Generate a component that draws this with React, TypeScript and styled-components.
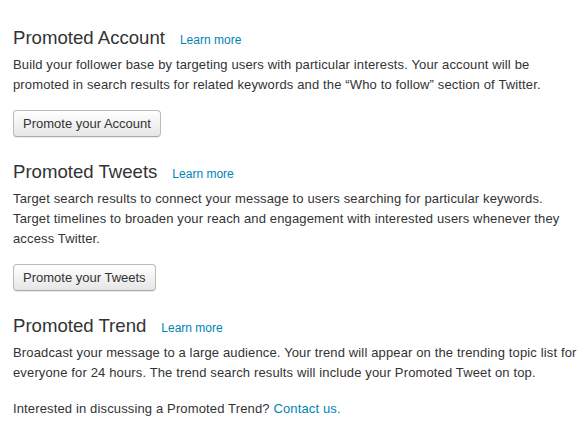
import React from "react";
import styled, { createGlobalStyle } from "styled-components";

const Global = createGlobalStyle`
  html, body { margin: 0; padding: 0; background: #fff; }
  body { font-family: "Liberation Sans", Arial, sans-serif; color: #333; }
`;

const Page = styled.div`
  padding: 26px 0 0 13px;
  display: flex;
  flex-direction: column;
`;

const Section = styled.section<{ $gap?: number }>`
  display: flex;
  flex-direction: column;
  align-items: flex-start;
  margin-bottom: ${(p) => p.$gap ?? 0}px;
`;

const TitleRow = styled.div`
  display: flex;
  align-items: baseline;
  gap: 15px;
  margin-bottom: 5px;
`;

const Title = styled.h2`
  margin: 0;
  font-size: 18.6px;
  font-weight: normal;
  line-height: 24px;
  color: #333;
`;

const Link = styled.a<{ $size?: number }>`
  color: #0084b4;
  text-decoration: none;
  font-size: ${(p) => p.$size ?? 13}px;
`;

const Body = styled.p<{ $top?: number }>`
  margin: ${(p) => p.$top ?? 0}px 0 0 0;
  font-size: 13px;
  line-height: 20px;
  letter-spacing: 0.14px;
  white-space: nowrap;
  color: #333;
`;

const Button = styled.button`
  margin-top: 15px;
  height: 27px;
  padding: 0 9px;
  font-family: "Liberation Sans", Arial, sans-serif;
  font-size: 13px;
  color: #333;
  border: 1px solid #bbb;
  border-bottom-color: #aaa;
  border-radius: 4px;
  background: linear-gradient(#fff, #e6e6e6);
  box-shadow: 0 1px 1px rgba(0, 0, 0, 0.08);
`;

export default function App() {
  return (
    <>
      <Global />
      <Page>
        <Section $gap={23}>
          <TitleRow>
            <Title>Promoted Account</Title>
            <Link $size={12} href="#">Learn more</Link>
          </TitleRow>
          <Body>
            Build your follower base by targeting users with particular interests. Your account will be
            <br />
            promoted in search results for related keywords and the “Who to follow” section of Twitter.
          </Body>
          <Button>Promote your Account</Button>
        </Section>
        <Section $gap={23}>
          <TitleRow>
            <Title>Promoted Tweets</Title>
            <Link $size={12} href="#">Learn more</Link>
          </TitleRow>
          <Body>
            Target search results to connect your message to users searching for particular keywords.
            <br />
            Target timelines to broaden your reach and engagement with interested users whenever they
            <br />
            access Twitter.
          </Body>
          <Button>Promote your Tweets</Button>
        </Section>
        <Section>
          <TitleRow>
            <Title>Promoted Trend</Title>
            <Link $size={12} href="#">Learn more</Link>
          </TitleRow>
          <Body>
            Broadcast your message to a large audience. Your trend will appear on the trending topic list for
            <br />
            everyone for 24 hours. The trend search results will include your Promoted Tweet on top.
          </Body>
          <Body $top={16}>
            Interested in discussing a Promoted Trend? <Link href="#">Contact us.</Link>
          </Body>
        </Section>
      </Page>
    </>
  );
}
